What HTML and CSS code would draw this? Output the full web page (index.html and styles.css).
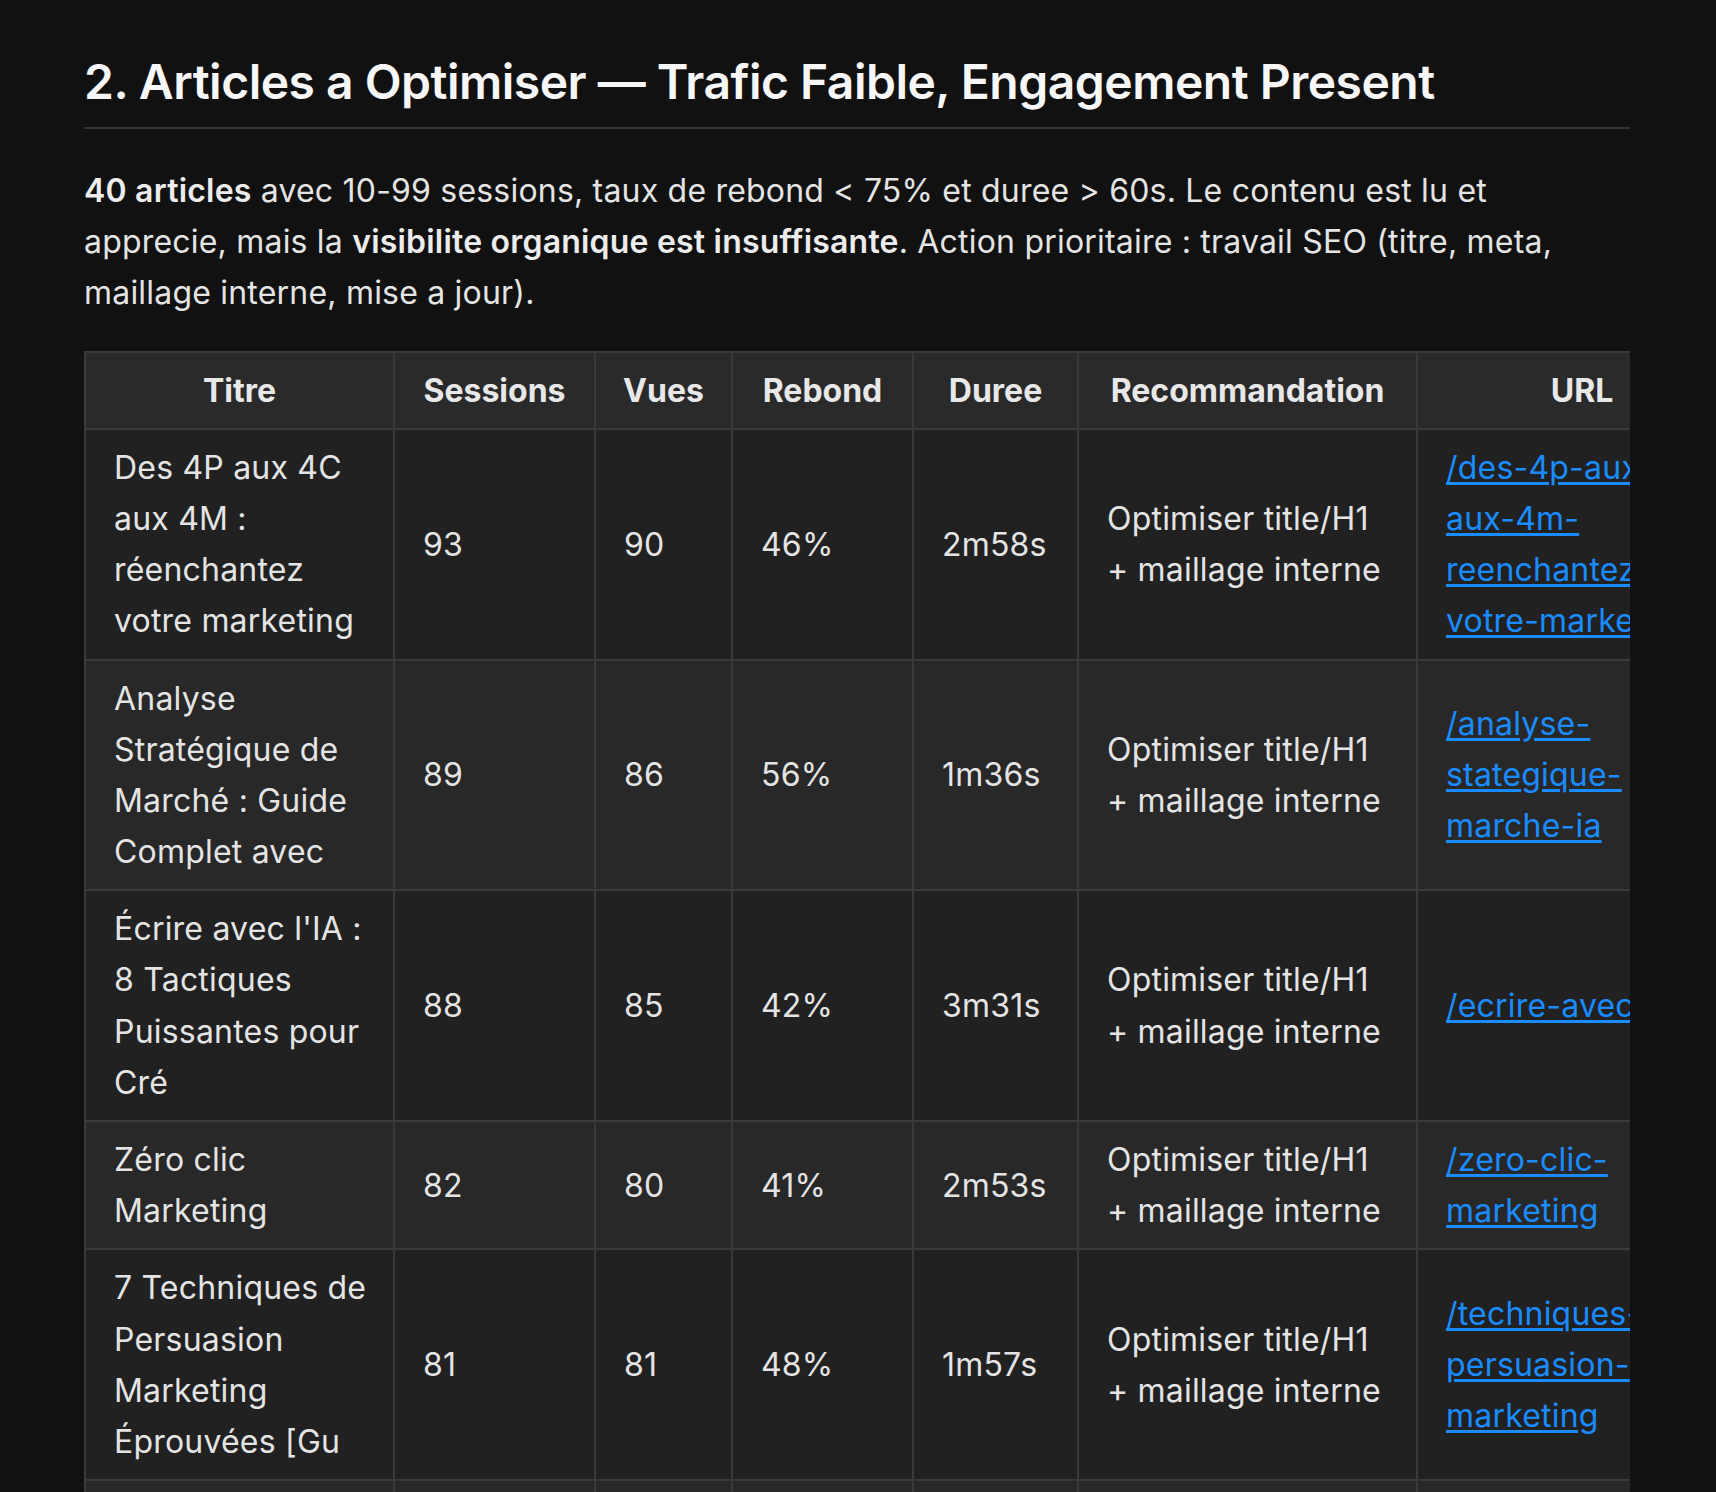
FILE: index.html
```html
<!DOCTYPE html>
<html lang="fr">
<head>
<meta charset="utf-8">
<title>Articles a Optimiser</title>
<link rel="stylesheet" href="styles.css">
</head>
<body>
<main class="doc">
  <h2 class="section-title">2. Articles a Optimiser — Trafic Faible, Engagement Present</h2>
  <p class="intro"><strong>40 articles</strong> avec 10-99 sessions, taux de rebond &lt; 75% et duree &gt; 60s. Le contenu est lu et apprecie, mais la <strong>visibilite organique est insuffisante</strong>. Action prioritaire : travail SEO (titre, meta, maillage interne, mise a jour).</p>
  <div class="table-wrap">
    <table class="data">
      <colgroup>
        <col class="c-title"><col class="c-sessions"><col class="c-vues"><col class="c-rebond"><col class="c-duree"><col class="c-reco"><col class="c-url">
      </colgroup>
      <thead>
        <tr><th>Titre</th><th>Sessions</th><th>Vues</th><th>Rebond</th><th>Duree</th><th>Recommandation</th><th>URL</th></tr>
      </thead>
      <tbody>
        <tr><td>Des 4P aux 4C aux 4M : réenchantez votre marketing</td><td>93</td><td>90</td><td>46%</td><td>2m58s</td><td>Optimiser title/H1 + maillage interne</td><td><a href="#">/des-4p-aux-4c-aux-4m-reenchantez-votre-marketing</a></td></tr>
        <tr><td>Analyse Stratégique de Marché : Guide Complet avec</td><td>89</td><td>86</td><td>56%</td><td>1m36s</td><td>Optimiser title/H1 + maillage interne</td><td><a href="#">/analyse-stategique-marche-ia</a></td></tr>
        <tr><td>Écrire avec l'IA : 8 Tactiques Puissantes pour Cré</td><td>88</td><td>85</td><td>42%</td><td>3m31s</td><td>Optimiser title/H1 + maillage interne</td><td><a href="#">/ecrire-avec-ia</a></td></tr>
        <tr><td>Zéro clic Marketing</td><td>82</td><td>80</td><td>41%</td><td>2m53s</td><td>Optimiser title/H1 + maillage interne</td><td><a href="#">/zero-clic-marketing</a></td></tr>
        <tr><td>7 Techniques de Persuasion Marketing Éprouvées [Gu</td><td>81</td><td>81</td><td>48%</td><td>1m57s</td><td>Optimiser title/H1 + maillage interne</td><td><a href="#">/techniques-persuasion-marketing</a></td></tr>
        <tr><td>Storytelling : l'Art de Captiver votre Audience</td><td>78</td><td>76</td><td>52%</td><td>2m14s</td><td>Optimiser title/H1 + maillage interne</td><td><a href="#">/storytelling-art-captiver-audience</a></td></tr>
      </tbody>
    </table>
  </div>
</main>
</body>
</html>
```

FILE: styles.css
```css
html, body {
  margin: 0;
  padding: 0;
  background: #111111;
}

body {
  font-family: "Inter", "Liberation Sans", sans-serif;
  color: #e4e4e4;
  font-size: 32px;
  line-height: 1.6;
}

.doc {
  width: 1546px;
  padding: 52px 0 0 84px;
}

.section-title {
  margin: 0;
  font-size: 48px;
  line-height: 60px;
  font-weight: 600;
  letter-spacing: -0.5px;
  color: #f7f7f7;
  padding-bottom: 15px;
  border-bottom: 2px solid #333333;
}

.intro {
  margin: 36px 0 32px;
  letter-spacing: 0.2px;
}

.intro strong {
  font-weight: 600;
  color: #ececec;
}

.table-wrap {
  width: 1546px;
  overflow: hidden;
}

.data {
  border-collapse: collapse;
  table-layout: fixed;
  width: 1662px;
}

.c-title { width: 309px; }
.c-sessions { width: 201px; }
.c-vues { width: 137px; }
.c-rebond { width: 181px; }
.c-duree { width: 165px; }
.c-reco { width: 339px; }
.c-url { width: 330px; }

.data th,
.data td {
  border: 2px solid #3a3a3a;
  padding: 12px 24px 12px 28px;
  vertical-align: middle;
}

.data th {
  background: #2a2a2a;
  font-weight: 700;
  text-align: center;
  color: #e8e8e8;
  padding-left: 26px;
  padding-right: 26px;
}

.data td {
  text-align: left;
  letter-spacing: 0.2px;
}

.data tbody tr:nth-child(odd) td {
  background: #212121;
}

.data tbody tr:nth-child(even) td {
  background: #282828;
}

.data a {
  color: #1a8cff;
  text-decoration: underline;
  text-underline-offset: 3px;
}
```
